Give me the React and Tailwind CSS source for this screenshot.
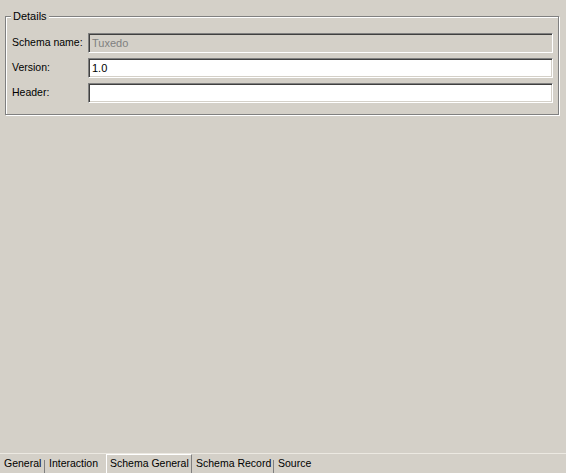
import React from "react";

const font = { fontFamily: "Tahoma, 'Liberation Sans', Arial, sans-serif" };

function Field({ label, value, disabled }) {
  return (
    <div className="flex items-center h-[20px]">
      <label className="w-[82px] shrink-0 pl-[6px] text-[10.5px] text-black whitespace-nowrap">{label}</label>
      <div
        className={`w-[465px] shrink-0 h-[20px] border border-t-[#808080] border-l-[#808080] border-b-white border-r-white shadow-[inset_1px_1px_0_#404040,inset_-1px_-1px_0_#d4d0c8] flex items-center px-[3px] text-[11px] ${
          disabled ? "bg-[#d4d0c8] text-[#808080]" : "bg-white text-black"
        }`}
      >
        {value}
      </div>
    </div>
  );
}

function Tabs() {
  const tabs = [
    { name: "General", w: "w-[45px]" },
    { name: "Interaction", w: "w-[61px]" },
    { name: "Schema General", w: "w-[86px]", active: true },
    { name: "Schema Record", w: "w-[82px]" },
    { name: "Source", w: "w-[40px]" },
  ];
  return (
    <div className="h-[20px] border-t border-[#ece9e2] flex items-stretch">
      {tabs.map((t, i) => {
        const next = tabs[i + 1];
        const sep = !t.active && next && !next.active;
        return (
          <div
            key={t.name}
            className={`${t.w} shrink-0 relative flex items-center text-[10.5px] text-black whitespace-nowrap ${
              t.active
                ? "border-t border-l border-r border-t-white border-l-white border-r-[#808080] pl-[3px]"
                : "pl-[4px]"
            }`}
          >
            {t.name}
            {sep && <span className="absolute right-0 bottom-0 w-px h-[13px] bg-[#808080]" />}
          </div>
        );
      })}
    </div>
  );
}

export default function App() {
  return (
    <div className="w-[566px] h-[473px] bg-[#d4d0c8] flex flex-col overflow-hidden" style={font}>
      <div className="flex-1 pt-[16px] pl-[5px]">
        <div className="relative w-[554px] h-[99px] border border-[#808080] shadow-[inset_1px_1px_0_#fff,1px_1px_0_#fff]">
          <span className="absolute left-[5px] -top-[8px] px-[2px] bg-[#d4d0c8] text-[11px] leading-[14px] text-black">
            Details
          </span>
          <div className="flex flex-col gap-[5px] pt-[16px]">
            <Field label="Schema name:" value="Tuxedo" disabled />
            <Field label="Version:" value="1.0" />
            <Field label="Header:" value="" />
          </div>
        </div>
      </div>
      <Tabs />
    </div>
  );
}
